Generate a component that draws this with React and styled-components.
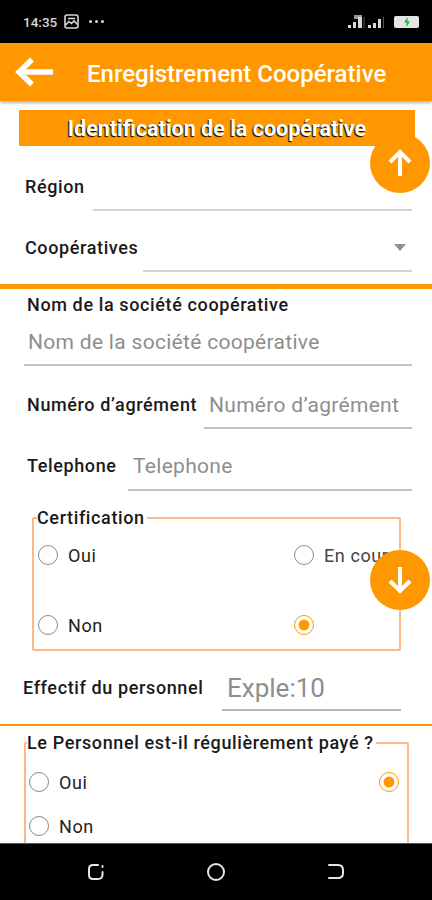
import React from 'react'
import styled, { createGlobalStyle } from 'styled-components'

const GlobalStyle = createGlobalStyle`
  html, body { margin: 0; padding: 0; background: #fff; }
  * { box-sizing: border-box; }
  body { font-family: Roboto, "Liberation Sans", sans-serif; }
`

const ORANGE = '#ff9800'

const App = () => {
  return (
    <Screen>
      <GlobalStyle />
      <StatusBar>
        <StatusLeft>
          <Clock>14:35</Clock>
          <svg width="15" height="15" viewBox="0 0 15 15" fill="none" stroke="#d8d8d8" strokeWidth="1.6">
            <rect x="1" y="1" width="13" height="13" rx="2" />
            <path d="M1.5 11 L5 7.5 L7.5 9.5 L10 7 L13.5 10.5" />
            <path d="M4 4.5h7" />
          </svg>
          <Dots>
            <i /><i /><i />
          </Dots>
        </StatusLeft>
        <StatusRight>
          <svg width="40" height="15" viewBox="0 0 40 15" fill="#d8d8d8">
            <rect x="0" y="11" width="3" height="3" />
            <rect x="5" y="8" width="3" height="6" />
            <rect x="10" y="3" width="4" height="11" />
            <rect x="6" y="1" width="8" height="4" opacity="0.7" />
            <rect x="15.5" y="3" width="1" height="11" opacity="0.4" />
            <rect x="20" y="11" width="3" height="3" />
            <rect x="25" y="9" width="3" height="5" />
            <rect x="30" y="5" width="3" height="9" />
            <rect x="35" y="3" width="1" height="11" opacity="0.4" />
          </svg>
          <Battery>
            <svg width="8" height="10" viewBox="0 0 8 10" fill="#1fb84f">
              <path d="M4.6 0 L1 5.600 H3.400 V10 L7 4.400 H4.600 Z" />
            </svg>
          </Battery>
        </StatusRight>
      </StatusBar>

      <AppBar>
        <BackButton>
          <svg width="40" height="30" viewBox="0 0 40 30" fill="none" stroke="#fff" strokeWidth="5.5">
            <path d="M39 15 H5" />
            <path d="M18 2.5 L5 15 L18 27.5" />
          </svg>
        </BackButton>
        <AppTitle>Enregistrement Coopérative</AppTitle>
      </AppBar>

      <Content>
        <Banner>Identification de la coopérative</Banner>

        <InlineField $top={23} $left={25} $height={42} $labelTop={8}>
          <Label>Région</Label>
          <Underline $left={93} $right={20} />
        </InlineField>

        <InlineField $top={19} $left={25} $height={42} $labelTop={8}>
          <Label>Coopératives</Label>
          <Underline $left={143} $right={20} />
          <Caret />
        </InlineField>

        <OrangeRule $height={5} $top={12} />

        <Label $left={27} $top={6}>Nom de la société coopérative</Label>
        <StackedInput>
          <Placeholder>Nom de la société coopérative</Placeholder>
        </StackedInput>

        <InlineField $top={22} $left={27} $height={41} $labelTop={7}>
          <Label>Numéro d’agrément</Label>
          <InputArea $left={204} $right={20} $top={4}>
            <Placeholder>Numéro d’agrément</Placeholder>
          </InputArea>
        </InlineField>

        <InlineField $top={19} $left={27} $height={43} $labelTop={8}>
          <Label>Telephone</Label>
          <InputArea $left={128} $right={20} $top={5}>
            <Placeholder>Telephone</Placeholder>
          </InputArea>
        </InlineField>

        <Group $left={32} $width={369} $top={17} $height={143}>
          <Legend>Certification</Legend>
          <RadioGrid $rowGap={50} $columns="256px 1fr" $padLeft={4} $padTop={17}>
            <Radio label="Oui" />
            <Radio label="En cours" muted />
            <Radio label="Non" />
            <Radio checked />
          </RadioGrid>
        </Group>

        <InlineField $top={20} $left={23} $height={40} $labelTop={7}>
          <Label>Effectif du personnel</Label>
          <InputArea $left={222} $right={31} $top={2} $dark>
            <BigPlaceholder>Exple:10</BigPlaceholder>
          </InputArea>
        </InlineField>

        <OrangeRule $height={2} $top={13} />

        <Group $left={24} $width={385} $top={7} $height={140}>
          <Legend $left={1}>Le Personnel est-il régulièrement payé ?</Legend>
          <RadioGrid $rowGap={24} $columns="350px 1fr" $padLeft={3} $padTop={19}>
            <Radio label="Oui" />
            <Radio checked />
            <Radio label="Non" />
          </RadioGrid>
        </Group>

        <Fab $top={32}>
          <svg width="26" height="28" viewBox="0 0 26 28" fill="none" stroke="#fff" strokeWidth="4">
            <path d="M13 27 V3" />
            <path d="M3 13 L13 3 L23 13" />
          </svg>
        </Fab>
        <Fab $top={449}>
          <svg width="26" height="28" viewBox="0 0 26 28" fill="none" stroke="#fff" strokeWidth="4">
            <path d="M13 1 V25" />
            <path d="M3 15 L13 25 L23 15" />
          </svg>
        </Fab>
      </Content>

      <NavBar>
        <svg width="18" height="18" viewBox="0 0 18 18" fill="none" stroke="#e6e6e6" strokeWidth="2" strokeLinecap="round">
          <path d="M11 2 H6 Q2 2 2 6 V12 Q2 16 6 16 H11 Q15 16 15.500 12 V9" />
          <path d="M15.500 3 V4" />
        </svg>
        <HomeDot />
        <svg width="18" height="18" viewBox="0 0 18 18" fill="none" stroke="#e6e6e6" strokeWidth="2" strokeLinecap="round">
          <path d="M2 2 H11 Q16 2 16 7 V10 Q16 15 11 15 H2" />
        </svg>
      </NavBar>
    </Screen>
  )
}

const Radio = ({ label, checked, muted }) => (
  <RadioRow>
    <RadioCircle $checked={checked} />
    {label && <RadioLabel $muted={muted}>{label}</RadioLabel>}
  </RadioRow>
)

export default App

const Screen = styled.div`
  width: 432px;
  height: 900px;
  display: flex;
  flex-direction: column;
  overflow: hidden;
  background: #fff;
`
const StatusBar = styled.div`
  height: 43px;
  flex: none;
  background: #000;
  display: flex;
  align-items: center;
  justify-content: space-between;
  padding: 0 13px 0 23px;
`
const StatusLeft = styled.div`
  display: flex;
  align-items: center;
  gap: 7px;
`
const Clock = styled.span`
  color: #d8d8d8;
  font-size: 13.5px;
  font-weight: 500;
`
const Dots = styled.span`
  display: flex;
  gap: 3px;
  margin-left: 3px;
  i {
    width: 3px;
    height: 3px;
    border-radius: 50%;
    background: #d8d8d8;
  }
`
const StatusRight = styled.div`
  display: flex;
  align-items: center;
  gap: 6px;
`
const Battery = styled.div`
  width: 25px;
  height: 12px;
  border-radius: 2px;
  background: #e4e4e4;
  display: flex;
  align-items: center;
  justify-content: center;
`
const AppBar = styled.header`
  height: 58px;
  flex: none;
  background: ${ORANGE};
  box-shadow: 0 2px 3px rgba(0, 0, 0, 0.3);
  display: flex;
  align-items: center;
  padding-left: 14px;
  position: relative;
  z-index: 2;
`
const BackButton = styled.div`
  display: flex;
  width: 73px;
`
const AppTitle = styled.h1`
  margin: 0;
  padding-top: 4px;
  color: #fff;
  font-size: 24px;
  font-weight: 500;
  white-space: nowrap;
`
const Content = styled.main`
  flex: 1;
  position: relative;
  overflow: hidden;
  padding-top: 9px;
`
const Banner = styled.div`
  margin: 0 17px 0 19px;
  height: 36px;
  background: ${ORANGE};
  color: #fff;
  display: flex;
  align-items: center;
  justify-content: center;
  font-size: 21.5px;
  font-weight: 700;
  text-shadow: -1px 1px 1px #000;
  white-space: nowrap;
`
const InlineField = styled.div`
  position: relative;
  height: ${p => p.$height}px;
  margin-top: ${p => p.$top}px;
  padding: ${p => p.$labelTop}px 0 0 ${p => p.$left}px;
`
const Label = styled.div`
  color: #1a1a1a;
  font-size: 18px;
  font-weight: 500;
  letter-spacing: 0.62px;
  line-height: 20px;
  white-space: nowrap;
  margin-left: ${p => p.$left || 0}px;
  margin-top: ${p => p.$top || 0}px;
`
const Underline = styled.div`
  position: absolute;
  left: ${p => p.$left}px;
  right: ${p => p.$right}px;
  bottom: 0;
  height: 2px;
  background: #d4d4d4;
`
const Caret = styled.div`
  position: absolute;
  right: 26px;
  top: 14px;
  width: 0;
  height: 0;
  border-left: 6px solid transparent;
  border-right: 6px solid transparent;
  border-top: 7px solid #8f8f8f;
`
const OrangeRule = styled.div`
  height: ${p => p.$height}px;
  margin-top: ${p => p.$top}px;
  background: ${ORANGE};
`
const StackedInput = styled.div`
  margin: 12px 20px 0 24px;
  height: 39px;
  padding: 2px 0 0 4px;
  border-bottom: 2px solid #c4c4c4;
`
const InputArea = styled.div`
  position: absolute;
  left: ${p => p.$left}px;
  right: ${p => p.$right}px;
  top: ${p => p.$top}px;
  bottom: 0;
  padding-left: 5px;
  border-bottom: 2px solid ${p => (p.$dark ? '#b8b8b8' : '#c4c4c4')};
  white-space: nowrap;
`
const Placeholder = styled.div`
  color: #8e8e8e;
  font-size: 21px;
  letter-spacing: 0.3px;
  line-height: 26px;
  white-space: nowrap;
`
const BigPlaceholder = styled.div`
  color: #8e8e8e;
  font-size: 26px;
  line-height: 30px;
  white-space: nowrap;
`
const Group = styled.fieldset`
  margin: ${p => p.$top}px 0 0 ${p => p.$left}px;
  padding: 0;
  width: ${p => p.$width}px;
  height: ${p => p.$height}px;
  border: 2px solid #f9b98a;
  border-radius: 2px;
  min-width: 0;
`
const Legend = styled.legend`
  margin-left: ${p => (p.$left === undefined ? 3 : p.$left)}px;
  padding: 0 2px 0 0;
  color: #1a1a1a;
  font-size: 18px;
  font-weight: 500;
  letter-spacing: 0.62px;
  line-height: 20px;
  white-space: nowrap;
`
const RadioGrid = styled.div`
  display: grid;
  grid-template-columns: ${p => p.$columns};
  row-gap: ${p => p.$rowGap}px;
  padding: ${p => p.$padTop}px 0 0 ${p => p.$padLeft}px;
`
const RadioRow = styled.div`
  display: flex;
  align-items: center;
  gap: 10px;
  height: 20px;
  overflow: visible;
`
const RadioCircle = styled.span`
  position: relative;
  width: 20px;
  height: 20px;
  flex: none;
  border-radius: 50%;
  border: 1.5px solid ${p => (p.$checked ? ORANGE : '#8a8a8a')};
  background: ${p =>
    p.$checked ? `radial-gradient(circle, ${ORANGE} 0 5px, transparent 5.8px)` : 'transparent'};
`
const RadioLabel = styled.span`
  color: ${p => (p.$muted ? '#444' : '#222')};
  font-size: 18px;
  letter-spacing: 0.6px;
  white-space: nowrap;
`
const Fab = styled.div`
  position: absolute;
  top: ${p => p.$top}px;
  left: 370px;
  width: 60px;
  height: 60px;
  border-radius: 50%;
  background: ${ORANGE};
  display: flex;
  align-items: center;
  justify-content: center;
`
const NavBar = styled.nav`
  height: 57px;
  flex: none;
  background: #000;
  border-top: 1px solid #555;
  display: flex;
  align-items: center;
  justify-content: space-between;
  padding: 0 87px;
`
const HomeDot = styled.div`
  width: 18px;
  height: 18px;
  border-radius: 50%;
  border: 2px solid #e6e6e6;
`
